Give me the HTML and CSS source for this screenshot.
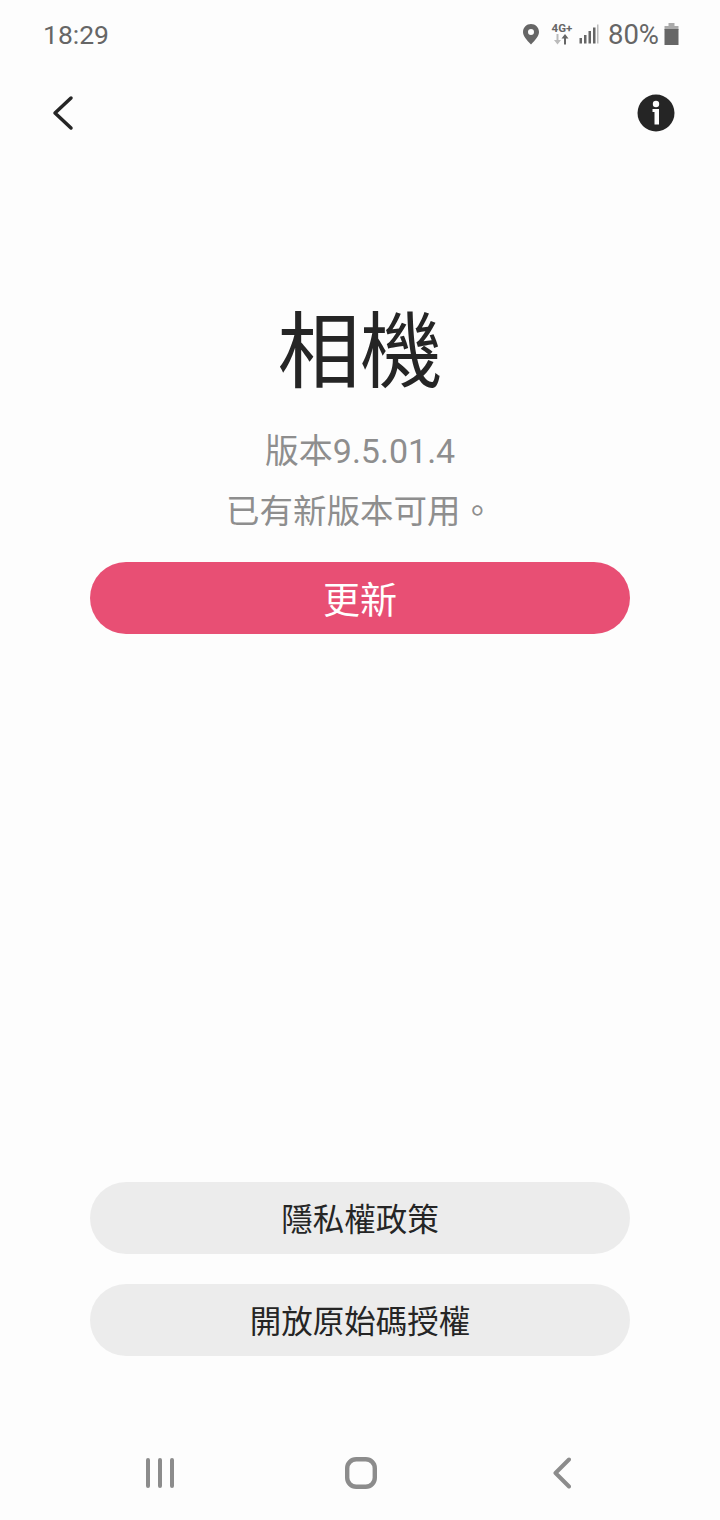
FILE: index.html

```html
<!DOCTYPE html>
<html lang="zh-Hant">
<head>
    <meta charset="UTF-8">
    <meta name="viewport" content="width=device-width, initial-scale=1.0">
    <title>相機</title>
    <link rel="stylesheet" href="styles.css">
</head>
<body>
    <div class="screen">
        <div class="status-bar">
            <span class="clock">18:29</span>
            <div class="status-icons">
                <svg class="icon-pin" width="18" height="22" viewBox="0 0 18 22">
                    <path fill="#666" fill-rule="evenodd" d="M9 1C4.600 1 1 4.500 1 9c0 3.800 3.600 8 8 12.500C13.400 17 17 12.800 17 9 17 4.500 13.400 1 9 1zM9 6a3 3 0 1 1 0 6 3 3 0 0 1 0-6z"/>
                </svg>
                <div class="net">
                    <span class="net-label">4G+</span>
                    <svg width="18" height="11" viewBox="0 0 18 11">
                        <path fill="#bbb" d="M3.500 0h2v6h2.500L4.500 10.500 1 6h2.500z"/>
                        <path fill="#666" d="M11 10.500h2v-6h2.500L12 0 8.500 4.500H11z"/>
                    </svg>
                </div>
                <svg class="icon-signal" width="20" height="20" viewBox="0 0 20 20">
                    <rect x="0.500" y="14" width="2.500" height="5.500" fill="#666"/>
                    <rect x="5" y="11" width="2.500" height="8.500" fill="#666"/>
                    <rect x="9.500" y="7" width="2.500" height="12.500" fill="#666"/>
                    <rect x="14" y="3.500" width="2.500" height="16" fill="#666"/>
                    <rect x="18" y="0.500" width="1.500" height="19" fill="#bbb"/>
                </svg>
                <span class="battery-text">80%</span>
                <svg class="icon-battery" width="15" height="24" viewBox="0 0 15 24">
                    <path fill="#aaa" d="M4.500 1h6v3h-6z"/>
                    <path fill="#aaa" d="M0.500 4h14v4h-14z"/>
                    <rect x="0.500" y="7" width="14" height="16" fill="#666"/>
                </svg>
            </div>
        </div>

        <div class="app-bar">
            <svg width="24" height="36" viewBox="0 0 24 36">
                <path d="M20 3 4 18l16 15" fill="none" stroke="#252525" stroke-width="3.500" stroke-linecap="round" stroke-linejoin="round"/>
            </svg>
            <svg width="38" height="38" viewBox="0 0 38 38">
                <circle cx="19" cy="19" r="18.500" fill="#252525"/>
                <circle cx="19" cy="10" r="3.200" fill="#fdfdfd"/>
                <path fill="#fdfdfd" d="M15.500 15H22V30.500H17.500V18H15.500z"/>
            </svg>
        </div>

        <main class="about">
            <h1 class="app-name">相機</h1>
            <p class="version">版本9.5.01.4</p>
            <p class="update-note">已有新版本可用。</p>
            <button class="pill pill-update">更新</button>
        </main>

        <div class="links">
            <button class="pill pill-link">隱私權政策</button>
            <button class="pill pill-link">開放原始碼授權</button>
        </div>

        <div class="nav-bar">
            <svg width="28" height="32" viewBox="0 0 28 32">
                <path d="M2 3v26M14 3v26M26 3v26" fill="none" stroke="#8c8c8c" stroke-width="4" stroke-linecap="round"/>
            </svg>
            <svg class="nav-home" width="32" height="32" viewBox="0 0 32 32">
                <rect x="2.200" y="2.200" width="27.600" height="27.600" rx="9" fill="none" stroke="#8c8c8c" stroke-width="4.400"/>
            </svg>
            <svg width="18" height="32" viewBox="0 0 18 32">
                <path d="M16 2.500 2.500 16 16 29.500" fill="none" stroke="#8c8c8c" stroke-width="4" stroke-linecap="round" stroke-linejoin="round"/>
            </svg>
        </div>
    </div>
</body>
</html>
```

FILE: styles.css

```css
* {
    box-sizing: border-box;
}
body {
    margin: 0;
    background-color: #fdfdfd;
    font-family: Roboto, "Noto Sans CJK TC", sans-serif;
}
.screen {
    width: 720px;
    height: 1520px;
    display: flex;
    flex-direction: column;
    overflow: hidden;
}
.status-bar {
    height: 70px;
    padding: 0 41px 2px 43px;
    display: flex;
    align-items: center;
    justify-content: space-between;
    color: #666;
}
.clock {
    font-size: 26.500px;
}
.status-icons {
    display: flex;
    align-items: center;
}
.icon-pin {
    margin-right: 10px;
}
.net {
    width: 24px;
    display: flex;
    flex-direction: column;
    align-items: center;
    margin-right: 5px;
}
.net-label {
    font-size: 11.500px;
    font-weight: 700;
    line-height: 11px;
}
.icon-signal {
    margin-right: 9px;
}
.battery-text {
    font-size: 27.500px;
    margin-right: 5px;
}
.app-bar {
    height: 86px;
    padding: 0 45px 0 51px;
    display: flex;
    align-items: center;
    justify-content: space-between;
}
.about {
    flex: 1;
    padding: 0 90px;
    display: flex;
    flex-direction: column;
    align-items: center;
}
.app-name {
    margin: 142px 0 0;
    font-size: 82.500px;
    font-weight: 400;
    line-height: 110px;
    color: #252525;
}
.version,
.update-note {
    margin: 0;
    color: #8e8e8e;
    line-height: 44px;
}
.version {
    margin-top: 21px;
    font-size: 34px;
}
.update-note {
    margin-top: 17px;
    font-size: 33.500px;
}
.pill {
    width: 540px;
    height: 72px;
    border: 0;
    border-radius: 36px;
    padding: 0;
    font-family: inherit;
}
.pill-update {
    margin-top: 28px;
    background-color: #e84f74;
    color: #fff;
    font-size: 37px;
}
.links {
    padding: 0 90px;
    display: flex;
    flex-direction: column;
    gap: 30px;
}
.pill-link {
    padding-bottom: 2px;
    background-color: #ececec;
    color: #252525;
    font-size: 31.500px;
}
.nav-bar {
    height: 164px;
    padding: 101px 0 0 146px;
    display: flex;
    align-items: flex-start;
    gap: 171px;
}
.nav-home {
    margin-right: 5px;
}
```
